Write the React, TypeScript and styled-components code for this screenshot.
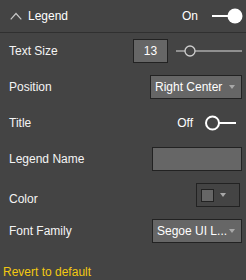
import React from "react";
import styled, { createGlobalStyle } from "styled-components";

const GlobalStyle = createGlobalStyle`
  html, body { margin: 0; padding: 0; background: #444444; }
  body { font-family: "Segoe UI", "Liberation Sans", Arial, sans-serif; }
  * { box-sizing: border-box; }
`;

const Panel = styled.div`
  width: 246px;
  height: 280px;
  background: #444444;
  display: flex;
  flex-direction: column;
  color: #f4f4f4;
  font-size: 12px;
  overflow: hidden;
`;

const Header = styled.div`
  height: 33px;
  border-bottom: 1px solid #303030;
  display: flex;
  align-items: center;
  padding: 0 3px 0 10px;
`;

const HeaderTitle = styled.span`
  margin-left: 6px;
  flex: 1;
  font-size: 12px;
  color: #ffffff;
`;

const StateLabel = styled.span<{ $gap: number }>`
  margin-right: ${(p) => p.$gap}px;
  color: #ffffff;
`;

const Body = styled.div`
  display: flex;
  flex-direction: column;
  gap: 12px;
  padding: 6px 4px 0 9px;
`;

const Row = styled.div`
  height: 24px;
  display: flex;
  align-items: center;
`;

const Label = styled.span<{ $shift?: number }>`
  flex: 1;
  color: #f4f4f4;
  position: relative;
  top: ${(p) => p.$shift ?? 0}px;
`;

const NumberBox = styled.div`
  width: 35px;
  height: 24px;
  background: #666666;
  border: 1px solid #222222;
  display: flex;
  align-items: center;
  justify-content: center;
  color: #ffffff;
  margin-right: 8px;
`;

const Dropdown = styled.div<{ $width: number }>`
  width: ${(p) => p.$width}px;
  height: 24px;
  background: #666666;
  border: 1px solid #222222;
  display: flex;
  align-items: center;
  padding: 0 6px 0 4px;
  color: #ffffff;
  white-space: nowrap;
`;

const DropText = styled.span`
  flex: 1;
  overflow: hidden;
`;

const Arrow = styled.span`
  width: 0;
  height: 0;
  border-left: 3.5px solid transparent;
  border-right: 3.5px solid transparent;
  border-top: 4px solid #a8a8a8;
`;

const TextInput = styled.div`
  width: 90px;
  height: 24px;
  background: #666666;
  border: 1px solid #222222;
`;

const ColorBox = styled.div`
  width: 44px;
  height: 24px;
  border: 1px solid #222222;
  display: flex;
  align-items: center;
  padding-left: 4px;
  gap: 6px;
  margin-right: 2px;
`;

const Swatch = styled.div`
  width: 13px;
  height: 13px;
  background: #666666;
  border: 1px solid #222222;
`;

const Revert = styled.div`
  margin-top: 22px;
  padding-left: 3px;
  color: #f2c811;
  font-size: 12px;
`;

const Chevron = () => (
  <svg width="12" height="8" viewBox="0 0 12 8">
    <path d="M0.7 7.3 L6 1.5 L11.3 7.3" fill="none" stroke="#c8c8c8" strokeWidth="1.2" />
  </svg>
);

const Toggle = ({ on, shift }: { on: boolean; shift?: number }) => (
  <svg width="31" height="16" viewBox="0 0 31 16" style={{ marginRight: shift ?? 0 }}>
    {on ? (
      <>
        <line x1="0" y1="8" x2="18" y2="8" stroke="#ffffff" strokeWidth="2" />
        <circle cx="23" cy="8" r="7.5" fill="#ffffff" />
      </>
    ) : (
      <>
        <line x1="14" y1="8" x2="31" y2="8" stroke="#ffffff" strokeWidth="2" />
        <circle cx="7.5" cy="8" r="6.5" fill="#444444" stroke="#ffffff" strokeWidth="2" />
      </>
    )}
  </svg>
);

const Slider = () => (
  <svg width="66" height="12" viewBox="0 0 66 12">
    <line x1="0" y1="6" x2="66" y2="6" stroke="#dcdcdc" strokeWidth="1.2" />
    <circle cx="14" cy="6" r="5" fill="#444444" stroke="#cfcfcf" strokeWidth="1.3" />
  </svg>
);

export default function App() {
  return (
    <>
      <GlobalStyle />
      <Panel>
        <Header>
          <Chevron />
          <HeaderTitle>Legend</HeaderTitle>
          <StateLabel $gap={14}>On</StateLabel>
          <Toggle on />
        </Header>
        <Body>
          <Row>
            <Label>Text Size</Label>
            <NumberBox>13</NumberBox>
            <Slider />
          </Row>
          <Row>
            <Label>Position</Label>
            <Dropdown $width={92}>
              <DropText>Right Center</DropText>
              <Arrow />
            </Dropdown>
          </Row>
          <Row>
            <Label>Title</Label>
            <StateLabel $gap={12}>Off</StateLabel>
            <Toggle on={false} shift={6} />
          </Row>
          <Row>
            <Label>Legend Name</Label>
            <TextInput />
          </Row>
          <Row>
            <Label $shift={4}>Color</Label>
            <ColorBox>
              <Swatch />
              <Arrow />
            </ColorBox>
          </Row>
          <Row>
            <Label>Font Family</Label>
            <Dropdown $width={90}>
              <DropText>Segoe UI L...</DropText>
              <Arrow />
            </Dropdown>
          </Row>
        </Body>
        <Revert>Revert to default</Revert>
      </Panel>
    </>
  );
}
